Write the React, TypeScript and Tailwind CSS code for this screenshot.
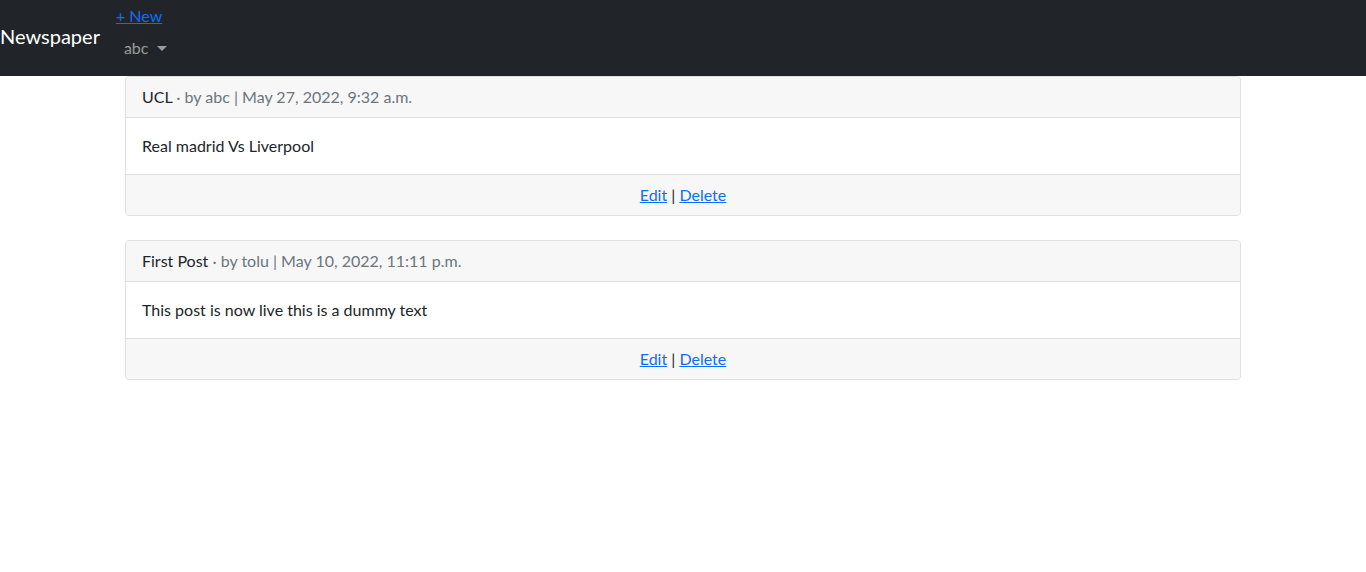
const posts = [
  {
    title: "UCL",
    author: "abc",
    date: "May 27, 2022, 9:32 a.m.",
    body: "Real madrid Vs Liverpool",
  },
  {
    title: "First Post",
    author: "tolu",
    date: "May 10, 2022, 11:11 p.m.",
    body: "This post is now live this is a dummy text",
  },
];

const App = () => {
  return (
    <div className="min-h-screen bg-white font-['Lato',sans-serif] text-base leading-6 text-[#212529]">
      {/* Navbar */}
      <nav className="flex h-[76px] items-center bg-[#212529]">
        <a href="#" className="mr-4 mb-1 py-[5px] text-xl leading-[30px] text-white">
          Newspaper
        </a>
        <div className="flex h-full flex-col pt-1">
          <a href="#" className="leading-6 text-[#0d6efd] underline">
            + New
          </a>
          <div className="flex items-center px-2 py-2 text-[rgba(255,255,255,0.55)]">
            abc
            <span className="ml-[9px] inline-block border-x-[5px] border-t-[5px] border-x-transparent border-t-[rgba(255,255,255,0.55)]" />
          </div>
        </div>
      </nav>

      {/* Posts */}
      <div className="mx-auto w-[1140px] px-3">
        {posts.map((p) => (
          <div key={p.title} className="mb-6 rounded border border-[#dfdfdf]">
            <div className="rounded-t border-b border-[#dfdfdf] bg-[#f7f7f7] px-4 py-2">
              <span>{p.title}</span>
              <span className="text-[#6c757d]">
                {" "}· by {p.author} | {p.date}
              </span>
            </div>
            <div className="p-4">{p.body}</div>
            <div className="rounded-b border-t border-[#dfdfdf] bg-[#f7f7f7] px-4 py-2 text-center">
              <a href="#" className="text-[#0d6efd] underline">
                Edit
              </a>{" "}
              |{" "}
              <a href="#" className="text-[#0d6efd] underline">
                Delete
              </a>
            </div>
          </div>
        ))}
      </div>
    </div>
  );
};

export default App;
